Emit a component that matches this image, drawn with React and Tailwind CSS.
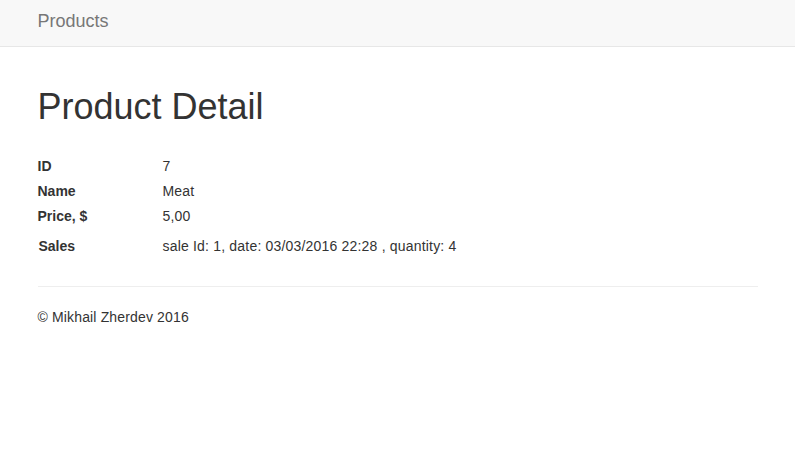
export default function App() {
  const rows = [
    { label: 'ID', value: '7' },
    { label: 'Name', value: 'Meat' },
    { label: 'Price, $', value: '5,00' },
  ];

  return (
    <div className="min-h-screen bg-white text-[#333] text-[14px] leading-[20px] font-['Liberation_Sans',Arial,sans-serif]">
      <nav className="h-[47px] bg-[#f8f8f8] border-b border-[#e7e7e7]">
        <div className="w-[750px] mx-auto px-[15px]">
          <a className="block pt-[11px] text-[18px] leading-[20px] text-[#777]">Products</a>
        </div>
      </nav>

      <div className="w-[750px] mx-auto px-[15px]">
        <h1 className="mt-[40px] mb-[29px] text-[36px] leading-[39.6px] font-normal">Product Detail</h1>

        <dl>
          {rows.map((row) => (
            <div key={row.label} className="flex h-[25px]">
              <dt className="w-[125px] font-bold">{row.label}</dt>
              <dd className="tracking-[0.19px]">{row.value}</dd>
            </div>
          ))}
          <div className="flex mt-[5px] h-[20px]">
            <dt className="w-[125px] font-bold pl-px">Sales</dt>
            <dd className="tracking-[0.19px]">sale Id: 1, date: 03/03/2016 22:28 , quantity: 4</dd>
          </div>
        </dl>

        <hr className="mt-[30px] mb-[20px] border-0 border-t border-[#eee]" />

        <footer>
          <p className="tracking-[0.15px]">© Mikhail Zherdev 2016</p>
        </footer>
      </div>
    </div>
  );
}
